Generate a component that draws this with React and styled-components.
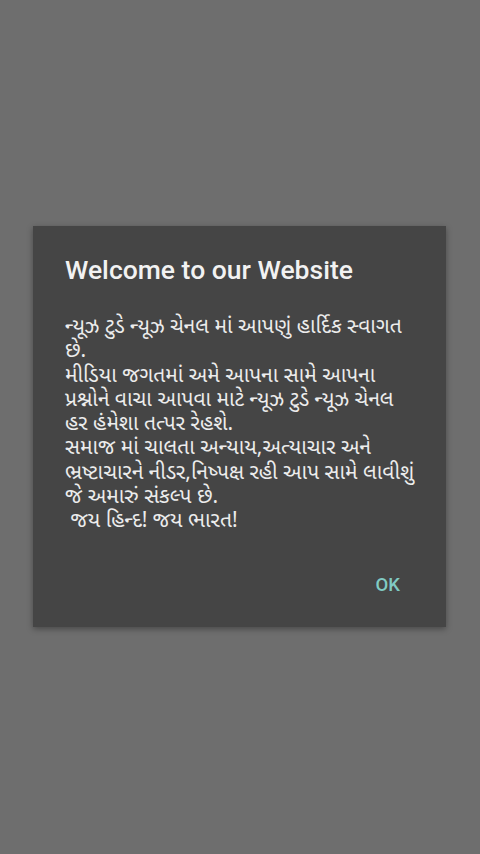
import React from 'react'
import styled, {createGlobalStyle} from 'styled-components'

const GlobalStyle = createGlobalStyle`
  html, body {
    margin: 0;
    padding: 0;
    background: #6e6e6e;
  }
  #root {
    min-height: 100vh;
  }
`

const lines = [
  'ન્યૂઝ ટુડે ન્યૂઝ ચેનલ માં આપણું હાર્દિક સ્વાગત',
  'છે.',
  'મીડિયા જગતમાં અમે આપના સામે આપના',
  'પ્રશ્નોને વાચા આપવા માટે ન્યૂઝ ટુડે ન્યૂઝ ચેનલ',
  'હર હંમેશા તત્પર રેહશે.',
  'સમાજ માં ચાલતા અન્યાય,અત્યાચાર અને',
  'ભ્રષ્ટાચારને નીડર,નિષ્પક્ષ રહી આપ સામે લાવીશું',
  'જે અમારું સંકલ્પ છે.',
  '\u00a0જય હિન્દ! જય ભારત!',
]

const App = () => (
  <Screen>
    <GlobalStyle/>
    <Dialog>
      <Title>Welcome to our Website</Title>
      <Message>
        {lines.map((line, i) => <Line key={i}>{line}</Line>)}
      </Message>
      <Actions>
        <OkButton>OK</OkButton>
      </Actions>
    </Dialog>
  </Screen>
)

export default App

const Screen = styled.div`
  height: 854px;
  display: flex;
  align-items: flex-start;
  justify-content: center;
  padding-top: 226px;
  box-sizing: border-box;
  background: #6e6e6e;
`

const Dialog = styled.div`
  width: 413px;
  height: 401px;
  box-sizing: border-box;
  margin-left: -1px;
  background: #454545;
  box-shadow: 0 2px 6px rgba(0, 0, 0, 0.35);
  padding: 28px 24px 0 32px;
  display: flex;
  flex-direction: column;
`

const Title = styled.h2`
  margin: 0;
  font-family: Roboto, "Liberation Sans", sans-serif;
  font-weight: 500;
  font-size: 26.5px;
  line-height: 32px;
  color: #f2f2f2;
`

const Message = styled.div`
  margin-top: 30px;
  font-family: "Noto Sans Gujarati", "Lohit Gujarati", "Noto Sans", sans-serif;
  font-size: 21px;
  line-height: 24.3px;
  color: #ececec;
`

const Line = styled.div`
  white-space: nowrap;
`

const Actions = styled.div`
  margin-top: auto;
  padding-bottom: 24px;
  display: flex;
  justify-content: flex-end;
`

const OkButton = styled.button`
  border: 0;
  background: transparent;
  padding: 8px 12px;
  margin-right: 10px;
  font-family: Roboto, "Liberation Sans", sans-serif;
  font-weight: 500;
  font-size: 18.5px;
  line-height: 20px;
  color: #80cbc4;
  cursor: pointer;
`
